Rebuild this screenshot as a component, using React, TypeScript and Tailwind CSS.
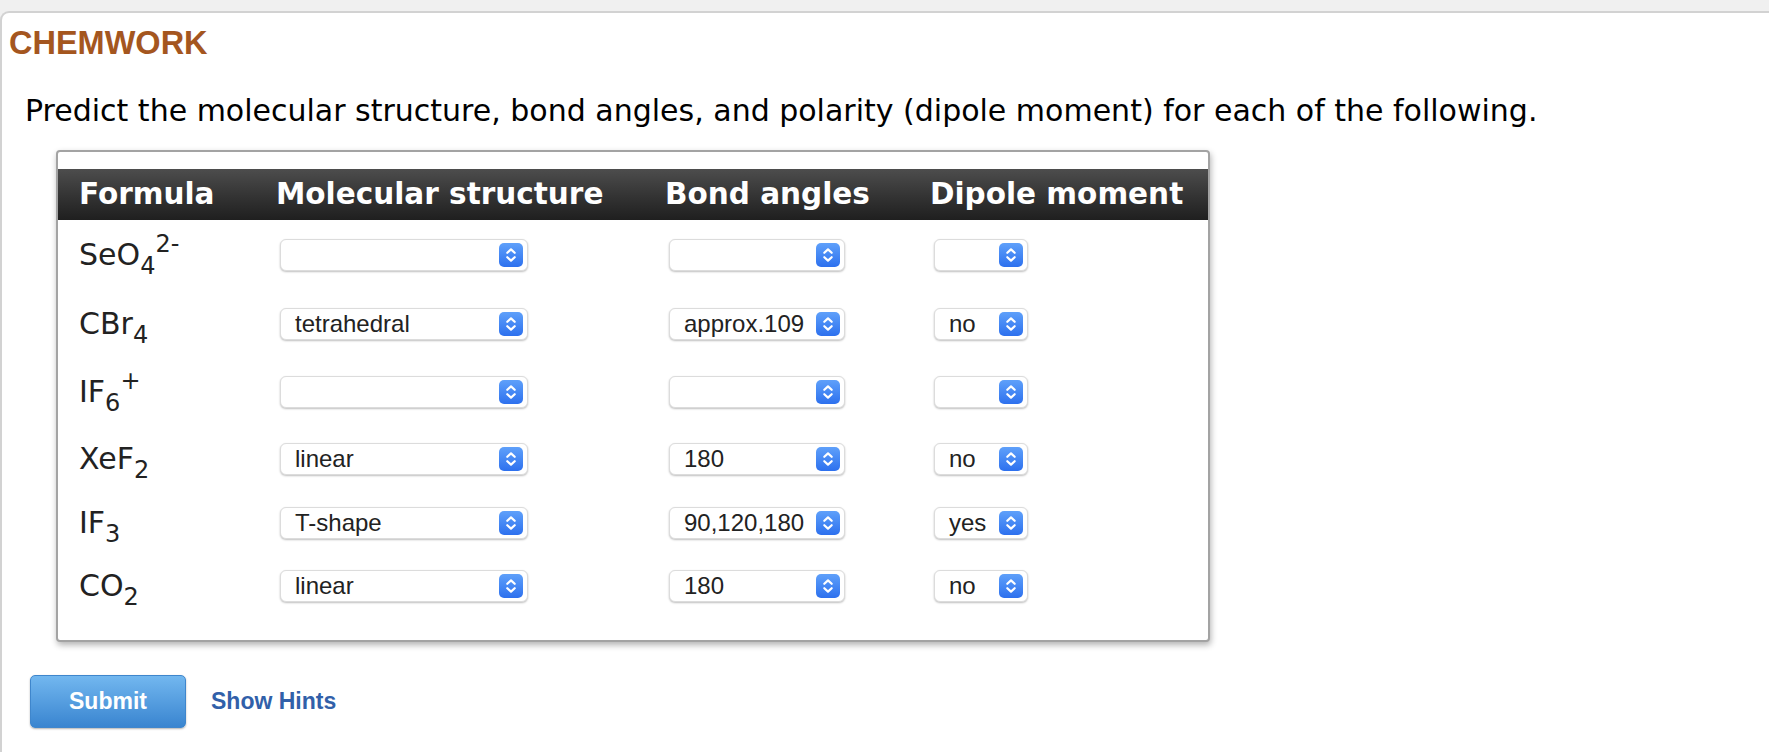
import React from "react";

interface Row {
  formula: React.ReactNode;
  structure: string;
  angles: string;
  dipole: string;
  height: string;
}

const sub = (t: string) => (
  <span className="relative top-[9px] text-[24px] leading-none">{t}</span>
);
const sup = (t: string) => (
  <span className="relative -top-[13px] text-[24px] leading-none">{t}</span>
);

const ROWS: Row[] = [
  { formula: <>SeO{sub("4")}{sup("2-")}</>, structure: "", angles: "", dipole: "", height: "h-[70px]" },
  { formula: <>CBr{sub("4")}</>, structure: "tetrahedral", angles: "approx.109", dipole: "no", height: "h-[68px]" },
  { formula: <>IF{sub("6")}{sup("+")}</>, structure: "", angles: "", dipole: "", height: "h-[68px]" },
  { formula: <>XeF{sub("2")}</>, structure: "linear", angles: "180", dipole: "no", height: "h-[66px]" },
  { formula: <>IF{sub("3")}</>, structure: "T-shape", angles: "90,120,180", dipole: "yes", height: "h-[63px]" },
  { formula: <>CO{sub("2")}</>, structure: "linear", angles: "180", dipole: "no", height: "h-[63px]" },
];

function Stepper() {
  return (
    <div className="flex h-[24px] w-[24px] items-center justify-center rounded-[5px] bg-linear-to-b from-[#5fa0fa] to-[#2d70ee]">
      <svg width="24" height="24" viewBox="0 0 24 24" fill="none">
        <path d="M8.3 9.8 L12 6.4 L15.7 9.8" stroke="#fff" strokeWidth="2.2" strokeLinecap="round" strokeLinejoin="round" />
        <path d="M8.3 14.2 L12 17.6 L15.7 14.2" stroke="#fff" strokeWidth="2.2" strokeLinecap="round" strokeLinejoin="round" />
      </svg>
    </div>
  );
}

function Select({ value, width }: { value: string; width: string }) {
  return (
    <div
      className={`ml-[25px] flex h-[32px] ${width} items-center justify-between rounded-[6px] border border-[#dcdcdc] bg-white pl-[14px] pr-[4px] shadow-[0_1px_2px_rgba(0,0,0,0.25)]`}
    >
      <span className="font-['Liberation_Sans',Arial,sans-serif] text-[24px] leading-none text-[#222]">{value}</span>
      <Stepper />
    </div>
  );
}

export default function App() {
  return (
    <div className="min-h-screen bg-[#f0f0f0] pt-[11px] font-['Liberation_Sans',Arial,sans-serif]">
      <div className="min-h-[741px] rounded-tl-[9px] border-l-2 border-t-2 border-[#d2d2d2] bg-white">
        <h1 className="pl-[7px] pt-[14px] text-[32.5px] font-bold leading-none text-[#a4561f]">CHEMWORK</h1>

        <p className="mt-[36px] pl-[23px] font-['DejaVu_Sans',Verdana,sans-serif] text-[30px] leading-none text-black">
          Predict the molecular structure, bond angles, and polarity (dipole moment) for each of the following.
        </p>

        <div className="ml-[54px] mt-[24px] w-[1154px] rounded-[4px] border-2 border-[#a3a3a3] bg-white pb-[22px] pt-[17px] shadow-[1px_3px_6px_rgba(0,0,0,0.3)]">
          <div className="grid h-[51px] grid-cols-[197px_389px_265px_1fr] items-center bg-linear-to-b from-[#4d4d4d] to-[#1f1f1f] font-['DejaVu_Sans',Verdana,sans-serif] text-[29.5px] font-bold text-white">
            <div className="pl-[21px]">Formula</div>
            <div className="pl-[21px]">Molecular structure</div>
            <div className="pl-[21px]">Bond angles</div>
            <div className="pl-[21px]">Dipole moment</div>
          </div>

          {ROWS.map((r, i) => (
            <div key={i} className={`grid ${r.height} grid-cols-[197px_389px_265px_1fr] items-center`}>
              <div className="pl-[21px] font-['DejaVu_Sans',Verdana,sans-serif] text-[30px] leading-none text-[#222]">{r.formula}</div>
              <Select value={r.structure} width="w-[248px]" />
              <Select value={r.angles} width="w-[176px]" />
              <Select value={r.dipole} width="w-[94px]" />
            </div>
          ))}
        </div>

        <div className="mt-[33px] flex items-center gap-[25px] pl-[28px]">
          <button className="h-[53px] w-[156px] rounded-[5px] border border-[#3f86cc] bg-linear-to-b from-[#72b7ef] to-[#3985d0] text-[23px] font-bold text-white shadow-[0_1px_2px_rgba(0,0,0,0.3)]">
            Submit
          </button>
          <a className="text-[23px] font-bold text-[#3160a9]">Show Hints</a>
        </div>
      </div>
    </div>
  );
}
